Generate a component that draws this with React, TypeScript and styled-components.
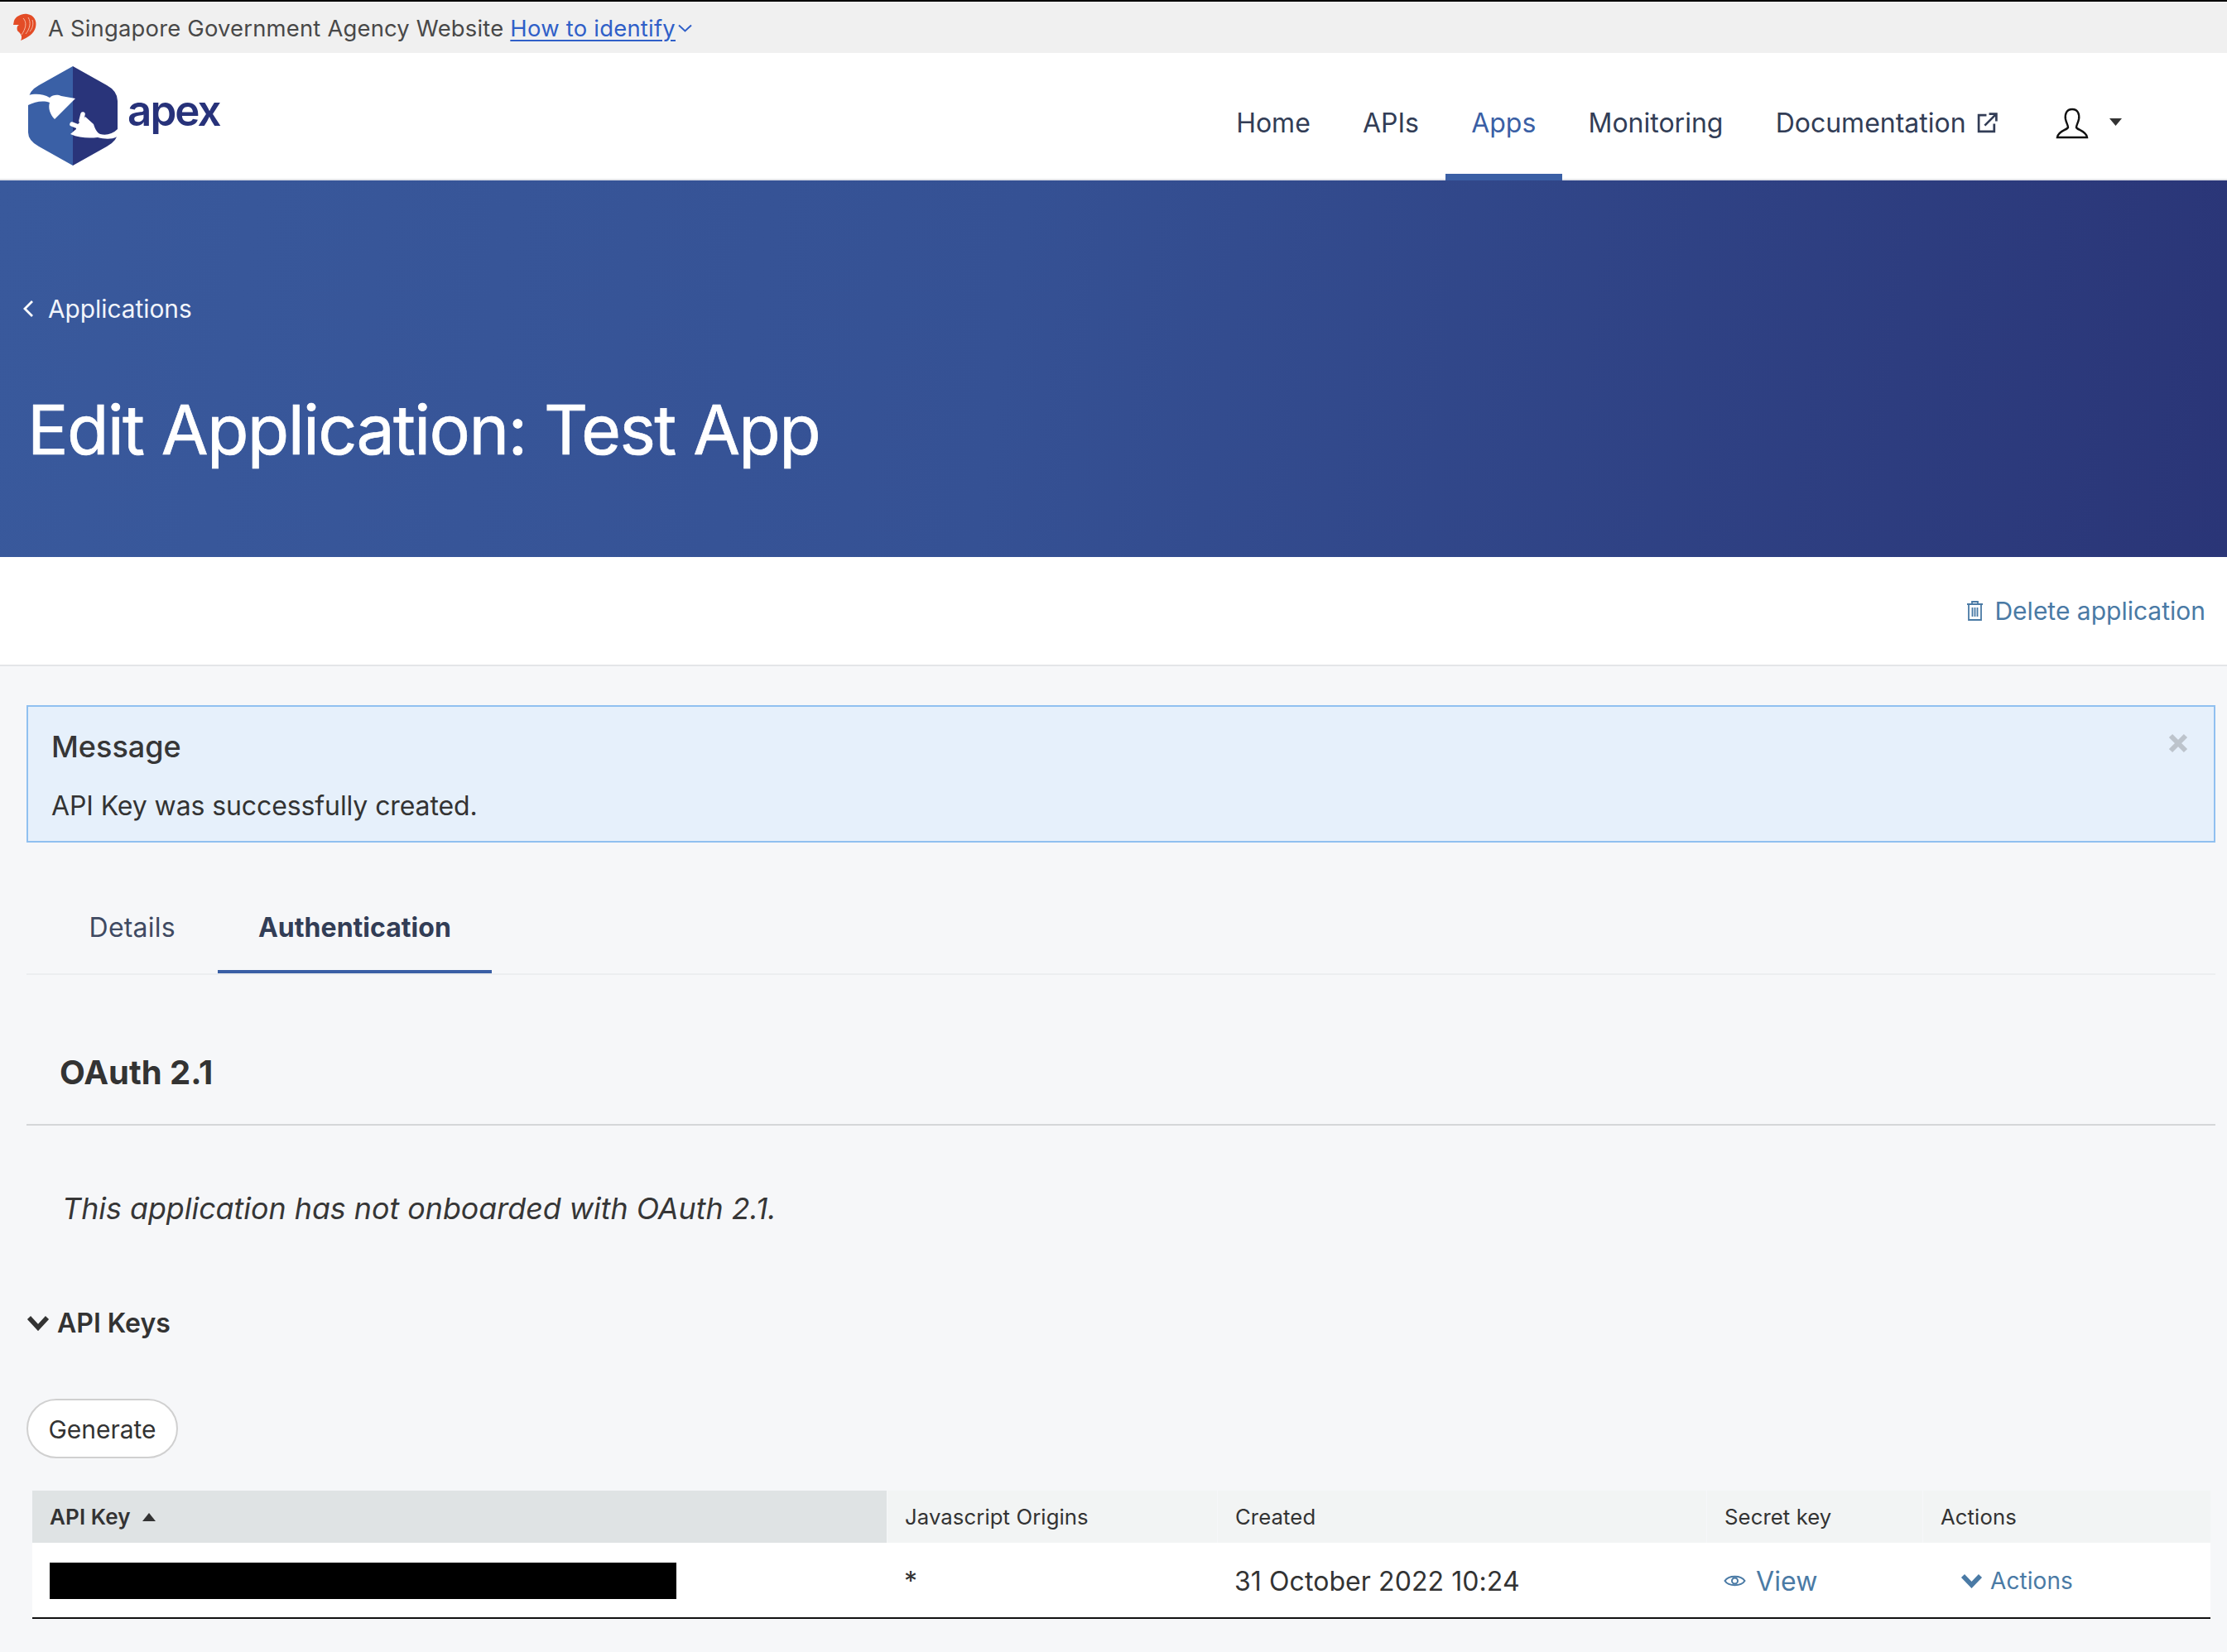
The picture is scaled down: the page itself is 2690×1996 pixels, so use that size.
import React from "react";
import styled, { createGlobalStyle } from "styled-components";

const Global = createGlobalStyle`
  html, body { margin: 0; padding: 0; background: #f6f7f9; }
  body { font-family: Inter, "Noto Sans", sans-serif; color: #333; }
  * { box-sizing: border-box; }
`;

const Page = styled.div`
  width: 2690px;
  height: 1996px;
  overflow: hidden;
  background: #f6f7f9;
  border-top: 2px solid #000;
`;

const Masthead = styled.div`
  height: 62px;
  background: #f0f0f0;
  display: flex;
  align-items: center;
  padding-left: 15px;
  font-size: 27.4px;
  color: #484848;
  letter-spacing: 0.2px;
  padding-top: 1px;
`;
const Lion = styled.svg`
  width: 30px;
  height: 34px;
  margin-right: 13px;
  margin-top: -4px;
  flex: none;
`;
const MastLink = styled.span`
  color: #2f5fc8;
  text-decoration: underline;
  text-underline-offset: 4px;
  text-decoration-thickness: 2px;
  margin-left: 8px;
  letter-spacing: 0.25px;
`;
const MastCaret = styled.svg`
  width: 17px;
  height: 10px;
  margin-left: 3px;
`;

const Navbar = styled.header`
  height: 154px;
  background: #fff;
  border-bottom: 2px solid #e4e5ea;
  display: flex;
  justify-content: space-between;
  align-items: stretch;
  padding-left: 34px;
`;
const Brand = styled.div`
  display: flex;
  align-items: flex-start;
  padding-top: 16px;
`;
const LogoMark = styled.svg`
  width: 108px;
  height: 120px;
  flex: none;
`;
const LogoText = styled.span`
  font-family: Inter, sans-serif;
  font-weight: 600;
  font-size: 51px;
  line-height: 60px;
  letter-spacing: -1.9px;
  color: #27327a;
  margin-left: 12px;
  margin-top: 24px;
`;
const Nav = styled.nav`
  display: flex;
  align-items: stretch;
  padding-right: 127px;
`;
const NavItem = styled.a<{ $active?: boolean }>`
  display: flex;
  align-items: center;
  gap: 12px;
  padding: 23px 31.6px 0;
  font-size: 32px;
  color: ${(p) => (p.$active ? "#3a5fa5" : "#323d56")};
  margin-bottom: -2px;
  border-bottom: 8px solid ${(p) => (p.$active ? "#3a5fa5" : "transparent")};
`;
const UserMenu = styled.div`
  display: flex;
  align-items: center;
  gap: 25px;
  margin-left: 37.8px;
`;
const UserIcon = styled.svg`
  width: 40px;
  height: 38px;
  margin-top: 18px;
`;
const UserCaret = styled.svg`
  width: 15px;
  height: 9px;
  margin-top: 14px;
`;

const Hero = styled.section`
  height: 455px;
  background: linear-gradient(98deg, #39599c 0%, #355194 45%, #2a3577 100%);
  color: #fff;
  padding-left: 28px;
  display: flex;
  flex-direction: column;
`;
const BackLink = styled.a`
  display: flex;
  align-items: center;
  gap: 17px;
  margin-top: 136px;
  height: 38px;
  font-size: 29.8px;
  color: #f2f5fb;
`;
const Title = styled.h1`
  margin: 77px 0 0 5px;
  font-size: 82.5px;
  line-height: 100px;
  font-weight: 400;
  letter-spacing: -1.7px;
  -webkit-text-stroke: 0.7px #fff;
`;

const ActionBar = styled.div`
  height: 132px;
  background: #fff;
  border-bottom: 2px solid #e4e5e8;
  display: flex;
  justify-content: flex-end;
  align-items: center;
  padding-right: 26px;
`;
const LinkButton = styled.a`
  display: flex;
  align-items: center;
  gap: 13px;
  color: #4a7aa5;
  font-size: 30px;
`;

const Main = styled.main`
  padding: 47px 14px 0 32px;
`;
const Message = styled.div`
  position: relative;
  height: 166px;
  background: #e6f0fb;
  border: 2px solid #90c0f0;
  padding: 26px 28px;
  color: #333;
`;
const MessageTitle = styled.div`
  font-size: 36px;
  line-height: 44px;
  font-weight: 500;
  color: #363636;
`;
const MessageBody = styled.div`
  margin-top: 30px;
  font-size: 32px;
  line-height: 40px;
  letter-spacing: -0.1px;
`;
const CloseIcon = styled.svg`
  position: absolute;
  top: 32px;
  right: 31px;
  width: 24px;
  height: 24px;
`;

const Tabs = styled.div`
  display: flex;
  height: 160px;
  padding-top: 58px;
  border-bottom: 2px solid #eceef0;
`;
const Tab = styled.div<{ $active?: boolean }>`
  display: flex;
  align-items: center;
  height: 100px;
  padding: 0 48.6px 8px;
  margin-left: ${(p) => (p.$active ? "0" : "27px")};
  margin-right: ${(p) => (p.$active ? "0" : "3px")};
  font-size: 32px;
  font-weight: ${(p) => (p.$active ? 700 : 400)};
  color: ${(p) => (p.$active ? "#323d56" : "#3f4a62")};
  border-bottom: 4px solid ${(p) => (p.$active ? "#3a5fa5" : "transparent")};
  letter-spacing: ${(p) => (p.$active ? "0.03px" : "0.2px")};
`;

const SectionTitle = styled.h2`
  margin: 0;
  padding: 86px 0 0 40px;
  height: 182px;
  font-size: 40px;
  line-height: 64px;
  font-weight: 700;
  color: #333;
  border-bottom: 2px solid #d4d6d8;
`;
const Note = styled.p`
  margin: 0;
  padding: 78px 0 0 43px;
  font-size: 35.8px;
  line-height: 44px;
  font-style: italic;
  color: #363636;
`;
const Collapse = styled.div`
  display: flex;
  align-items: center;
  gap: 9px;
  margin-top: 96px;
  height: 40px;
  font-size: 32px;
  font-weight: 600;
  color: #333;
`;
const Generate = styled.button`
  display: block;
  margin: 72px 0 0 0;
  width: 183px;
  height: 72px;
  border: 2px solid #d0d0d0;
  border-radius: 36px;
  background: #fff;
  font-family: Inter, sans-serif;
  font-size: 30px;
  color: #333;
  padding: 1px 0 0;
`;

const Table = styled.div`
  margin: 39px 0 0 7px;
  width: 2631px;
  display: grid;
  grid-template-columns: 1032px 399px 591px 261px 348px;
`;
const Head = styled.div<{ $sorted?: boolean }>`
  height: 63px;
  display: flex;
  align-items: center;
  gap: 14px;
  padding-left: 21px;
  font-size: ${(p) => (p.$sorted ? "26px" : "25.7px")};
  background: ${(p) => (p.$sorted ? "#dfe3e4" : "#f2f4f4")};
  font-weight: ${(p) => (p.$sorted ? 600 : 400)};
  color: #333;
  border-left: ${(p) => (p.$sorted ? "0" : "1px solid #f6f7f9")};
  letter-spacing: 0.1px;
`;
const Cell = styled.div<{ $link?: boolean; $pad?: number; $gap?: number }>`
  height: 92px;
  background: #fff;
  border-bottom: 2px solid #111;
  display: flex;
  align-items: center;
  gap: ${(p) => p.$gap ?? 12}px;
  padding-top: 2px;
  padding-left: ${(p) => p.$pad ?? 21}px;
  font-size: 32px;
  letter-spacing: 0.08px;
  color: ${(p) => (p.$link ? "#4a7aa5" : "#333")};
`;
const Redacted = styled.div`
  width: 757px;
  height: 44px;
  background: #000;
`;
const SmallLink = styled.span`
  font-size: 28px;
`;

const Logo = () => (
  <LogoMark viewBox="34 80 108 120">
    <path d="M88 80 L47 103 Q34 110 34 122 L34 160 Q34 170 47 177 L88 200 Z" fill="#3a60a6" />
    <path d="M88 80 L129 103 Q142 110 142 122 L142 160 Q142 170 129 177 L88 200 Z" fill="#29347a" />
    <path d="M34 115 C42 113 52 113 60 118 C64 114 70 114 74 116 L91 119 L66 144 C60 138 58 130 60 124 C52 121 42 123 34 127 Z" fill="#fff" />
    <path d="M92 152 L103 141 L113 150 C115 156 117 160 121 162 C128 164 136 162 142 156 L142 165 C134 169 126 168 118 166 C108 167 96 167 85 162 L92 156 Z" fill="#fff" />
    <path d="M98 146 L100 138 M92 152 L87 150" stroke="#fff" strokeWidth="5.5" strokeLinecap="round" fill="none" />
  </LogoMark>
);

export default function App() {
  return (
    <Page>
      <Global />
      <Masthead>
        <Lion viewBox="0 0 30 34">
          <path d="M2 10 C4 5 11 1 18 2 C26 3 30 10 28 18 C26 26 19 30 10 34 C13 28 9 25 6 22 C5 18 6 16 8 15 L1 15 Z" fill="#e34c26" />
          <path d="M13 7 C18 12 16 20 11 27 M19 6 C23 12 21 20 16 26 M24 9 C26 14 24 20 21 23" stroke="#f6b9a4" strokeWidth="1" fill="none" />
        </Lion>
        A Singapore Government Agency Website
        <MastLink>How to identify</MastLink>
        <MastCaret viewBox="0 0 17 10">
          <path d="M1 1.5 L8.5 8.5 L16 1.5" fill="none" stroke="#2f5fc8" strokeWidth="2" />
        </MastCaret>
      </Masthead>

      <Navbar>
        <Brand>
          <Logo />
          <LogoText>apex</LogoText>
        </Brand>
        <Nav>
          <NavItem>Home</NavItem>
          <NavItem>APIs</NavItem>
          <NavItem $active>Apps</NavItem>
          <NavItem>Monitoring</NavItem>
          <NavItem>
            Documentation
            <svg width="27" height="27" viewBox="0 0 26 26" fill="none" stroke="#323d56" strokeWidth="2.6">
              <path d="M12 4 H3 V23 H21 V14" />
              <path d="M10 16 L23 3 M15 2.5 H23.5 V11" />
            </svg>
          </NavItem>
          <UserMenu>
            <UserIcon viewBox="0 0 40 38" fill="none" stroke="#111" strokeWidth="2.4">
              <path d="M20 2 C13 2 11 8 12 14 C13 19 15 21 15 24 C14 27 3 28 2 36 H38 C37 28 26 27 25 24 C25 21 27 19 28 14 C29 8 27 2 20 2 Z" />
            </UserIcon>
            <UserCaret viewBox="0 0 15 9">
              <path d="M0 0 H15 L7.5 9 Z" fill="#333" />
            </UserCaret>
          </UserMenu>
        </Nav>
      </Navbar>

      <Hero>
        <BackLink>
          <svg width="13" height="22" viewBox="0 0 13 22" fill="none" stroke="#fff" strokeWidth="2.8">
            <path d="M11 2 L2 11 L11 20" />
          </svg>
          Applications
        </BackLink>
        <Title>Edit Application: Test App</Title>
      </Hero>

      <ActionBar>
        <LinkButton>
          <svg width="21" height="26" viewBox="0 0 21 26" fill="none" stroke="#4a7aa5" strokeWidth="1.8">
            <path d="M1 5 H20 M7 5 V2 H14 V5 M3 5 V24 H18 V5 M7.5 9 V20 M10.5 9 V20 M13.5 9 V20" />
          </svg>
          Delete application
        </LinkButton>
      </ActionBar>

      <Main>
        <Message>
          <MessageTitle>Message</MessageTitle>
          <MessageBody>API Key was successfully created.</MessageBody>
          <CloseIcon viewBox="0 0 24 24">
            <path d="M3 3 L21 21 M21 3 L3 21" stroke="#bdc4cc" strokeWidth="6" />
          </CloseIcon>
        </Message>

        <Tabs>
          <Tab>Details</Tab>
          <Tab $active>Authentication</Tab>
        </Tabs>

        <SectionTitle>OAuth 2.1</SectionTitle>
        <Note>This application has not onboarded with OAuth 2.1.</Note>

        <Collapse>
          <svg width="28" height="19" viewBox="0 0 28 19" fill="none" stroke="#333" strokeWidth="5.6">
            <path d="M3 3 L14 15 L25 3" />
          </svg>
          API Keys
        </Collapse>

        <Generate>Generate</Generate>

        <Table>
          <Head $sorted>
            API Key
            <svg width="16" height="10" viewBox="0 0 16 10">
              <path d="M0 10 L8 0 L16 10 Z" fill="#333" />
            </svg>
          </Head>
          <Head>Javascript Origins</Head>
          <Head>Created</Head>
          <Head>Secret key</Head>
          <Head>Actions</Head>

          <Cell>
            <Redacted />
          </Cell>
          <Cell>*</Cell>
          <Cell>31 October 2022 10:24</Cell>
          <Cell $link>
            <svg width="27" height="18" viewBox="0 0 27 18" fill="none" stroke="#4a7aa5" strokeWidth="2">
              <path d="M1.5 9 C6 2 21 2 25.5 9 C21 16 6 16 1.5 9 Z" />
              <circle cx="13.5" cy="9" r="3.5" />
            </svg>
            View
          </Cell>
          <Cell $link $pad={46} $gap={9}>
            <svg width="27" height="18" viewBox="0 0 27 18" fill="none" stroke="#4a7aa5" strokeWidth="5.6">
              <path d="M3 3 L13.5 14 L24 3" />
            </svg>
            <SmallLink>Actions</SmallLink>
          </Cell>
        </Table>
      </Main>
    </Page>
  );
}
